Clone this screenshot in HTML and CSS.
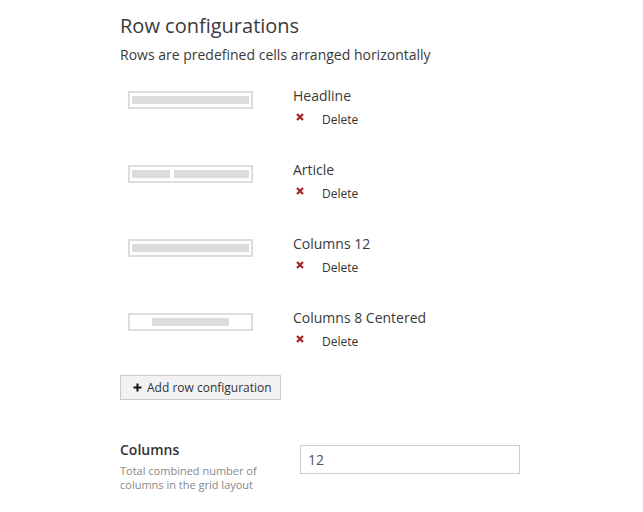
FILE: index.html
```html
<!DOCTYPE html>
<html lang="en">
<head>
  <meta charset="UTF-8">
  <title>Row configurations</title>
  <link rel="stylesheet" href="styles.css">
</head>
<body>
  <div class="panel">
    <h2>Row configurations</h2>
    <p class="lead">Rows are predefined cells arranged horizontally</p>

    <div class="row-item">
      <div class="preview"><span class="cell full"></span></div>
      <div class="info">
        <div class="name">Headline</div>
        <a class="delete" href="#"><svg width="8" height="8" viewBox="0 0 8 8"><path d="M1 1L7 7M7 1L1 7" stroke="#a3262a" stroke-width="2.2"/></svg>Delete</a>
      </div>
    </div>

    <div class="row-item">
      <div class="preview"><span class="cell c4"></span><span class="cell c8"></span></div>
      <div class="info">
        <div class="name">Article</div>
        <a class="delete" href="#"><svg width="8" height="8" viewBox="0 0 8 8"><path d="M1 1L7 7M7 1L1 7" stroke="#a3262a" stroke-width="2.2"/></svg>Delete</a>
      </div>
    </div>

    <div class="row-item">
      <div class="preview"><span class="cell full"></span></div>
      <div class="info">
        <div class="name">Columns 12</div>
        <a class="delete" href="#"><svg width="8" height="8" viewBox="0 0 8 8"><path d="M1 1L7 7M7 1L1 7" stroke="#a3262a" stroke-width="2.2"/></svg>Delete</a>
      </div>
    </div>

    <div class="row-item">
      <div class="preview centered"><span class="cell c8"></span></div>
      <div class="info">
        <div class="name">Columns 8 Centered</div>
        <a class="delete" href="#"><svg width="8" height="8" viewBox="0 0 8 8"><path d="M1 1L7 7M7 1L1 7" stroke="#a3262a" stroke-width="2.2"/></svg>Delete</a>
      </div>
    </div>

    <button class="add-btn"><svg width="9" height="9" viewBox="0 0 9 9"><path d="M4.5 0.5V8.5M0.5 4.5H8.5" stroke="#111" stroke-width="2"/></svg>Add row configuration</button>

    <div class="field">
      <div class="field-label">
        <div class="label">Columns</div>
        <div class="help">Total combined number of columns in the grid layout</div>
      </div>
      <input class="text-input" type="text" value="12">
    </div>
  </div>
</body>
</html>
```

FILE: styles.css
```css
body {
  margin: 0;
  font-family: 'Open Sans', sans-serif;
  color: #333;
  background: #fff;
}

.panel {
  padding: 12px 0 0 120px;
}

h2 {
  margin: 0;
  font-size: 20px;
  line-height: 28px;
  font-weight: 400;
  color: #3a3a3a;
}

.lead {
  margin: 5px 0 21px;
  font-size: 14px;
  line-height: 20px;
  color: #3a3a3a;
}

.row-item {
  display: flex;
  padding-left: 8px;
  margin-bottom: 30px;
}

.preview {
  width: 119px;
  height: 8px;
  margin-top: 5px;
  border: 2px solid #ddd;
  padding: 3px 1px;
  display: flex;
  gap: 3px;
}

.preview.centered {
  justify-content: center;
}

.cell {
  display: block;
  height: 8px;
  margin: 0 1px;
  background: #dcdcdc;
}

.cell.full { flex: 1; }
.cell.c4 { width: 39px; margin-right: 0; }
.cell.c8 { width: 77px; }

.info {
  margin-left: 40px;
}

.name {
  font-size: 14px;
  line-height: 20px;
  color: #3a3a3a;
}

.delete {
  display: flex;
  align-items: center;
  margin-top: 4px;
  font-size: 12px;
  line-height: 20px;
  color: #333;
  text-decoration: none;
}

.delete svg {
  margin: 0 18px 0 3px;
  position: relative;
  top: -3px;
}

.add-btn {
  display: flex;
  align-items: center;
  box-sizing: border-box;
  margin-top: -7px;
  width: 161px;
  height: 25px;
  padding: 0 0 0 12px;
  white-space: nowrap;
  font-family: 'Open Sans', sans-serif;
  font-size: 12px;
  color: #333;
  background: #f2f2f2;
  border: 1px solid #ccc;
  border-radius: 0;
}

.add-btn svg {
  margin-right: 5px;
}

.field {
  display: flex;
  margin-top: 40px;
}

.field-label {
  width: 180px;
}

.label {
  font-size: 14px;
  line-height: 20px;
  font-weight: 600;
  color: #333;
}

.help {
  margin-top: 4px;
  width: 150px;
  font-size: 11px;
  line-height: 14px;
  color: #888;
}

.text-input {
  margin-top: 5px;
  width: 220px;
  height: 29px;
  box-sizing: border-box;
  border: 1px solid #ccc;
  padding: 0 7px;
  font-family: 'Open Sans', sans-serif;
  font-size: 14px;
  color: #555;
}
```
